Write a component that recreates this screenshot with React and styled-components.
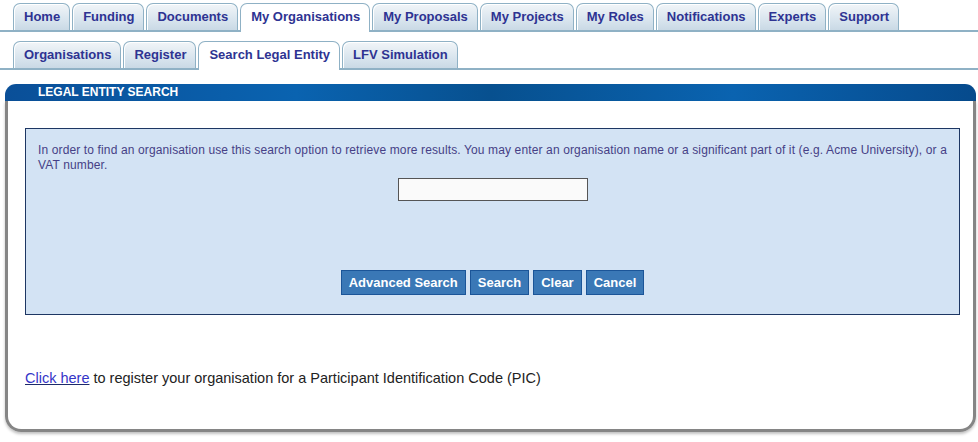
import React from "react";
import styled, { createGlobalStyle } from "styled-components";

const Global = createGlobalStyle`
  body {
    margin: 0;
    background: #fff;
    font-family: "Liberation Sans", Arial, sans-serif;
  }
`;

const Page = styled.div`
  width: 978px;
  height: 442px;
  overflow: hidden;
`;

const TabBar = styled.div`
  display: flex;
  gap: 2px;
  padding: ${(p) => p.$top}px 0 0 13px;
  border-bottom: 2px solid #8fb1c5;
  height: ${(p) => p.$height}px;
  box-sizing: content-box;
`;

const Tab = styled.div`
  box-sizing: border-box;
  padding: 0 9px ${(p) => (p.$active ? "4px" : "2px")} 10px;
  display: flex;
  align-items: center;
  font-size: 13px;
  font-weight: bold;
  color: #2e3392;
  border: 1px solid #8fb1c5;
  border-bottom: none;
  border-radius: 7px 7px 0 0;
  background: ${(p) =>
    p.$active ? "#fff" : "linear-gradient(#f1f5f8, #d5e2ec 70%, #c9d9e5)"};
  margin-bottom: ${(p) => (p.$active ? "-2px" : "0")};
  height: ${(p) => (p.$active ? "calc(100% + 2px)" : "100%")};
  box-shadow: ${(p) => (p.$active ? "none" : "inset 1px 1px 0 #fff")};
`;

const Panel = styled.div`
  margin: 14px 2px 0 5px;
`;

const PanelHeader = styled.div`
  height: 17px;
  border-radius: 11px 11px 0 0;
  background: linear-gradient(90deg, #0a4f98 0%, #0a63b0 30%, #07508f 50%, #0a63b0 75%, #064a8c 100%);
  color: #fff;
  font-size: 12px;
  font-weight: bold;
  line-height: 17px;
  padding-left: 33px;
`;

const PanelBody = styled.div`
  border: 3px solid #858585;
  border-top: none;
  border-radius: 0 0 16px 16px;
  height: 331px;
  box-sizing: border-box;
  padding: 27px 13px 0 17px;
  box-shadow: 0 2px 3px rgba(0, 0, 0, 0.25);
`;

const SearchBox = styled.div`
  height: 187px;
  box-sizing: border-box;
  background: #d3e3f4;
  border: 1px solid #1d3663;
  padding: 14px 12px 0 12px;
  display: flex;
  flex-direction: column;
  align-items: center;
`;

const Info = styled.p`
  margin: 0;
  align-self: stretch;
  font-size: 12px;
  letter-spacing: 0.13px;
  line-height: 15px;
  color: #463f86;
`;

const SearchInput = styled.input`
  margin-top: 5px;
  width: 190px;
  height: 23px;
  box-sizing: border-box;
  border: 1px solid #555;
  background: #fafafa;
`;

const Buttons = styled.div`
  display: flex;
  gap: 4px;
  margin-top: 69px;
`;

const Button = styled.button`
  height: 25px;
  padding: 0 7px;
  background: #3a78b6;
  border: 1px solid #1b5598;
  color: #fff;
  font-family: "Liberation Sans", Arial, sans-serif;
  font-size: 13px;
  font-weight: bold;
  cursor: pointer;
`;

const Note = styled.p`
  margin: 55px 0 0 0;
  font-size: 14.5px;
  color: #222;
  a {
    color: #3535c8;
    text-decoration: underline;
    text-decoration-color: #1d2a6a;
  }
`;

const mainTabs = [
  "Home",
  "Funding",
  "Documents",
  "My Organisations",
  "My Proposals",
  "My Projects",
  "My Roles",
  "Notifications",
  "Experts",
  "Support",
];

const subTabs = ["Organisations", "Register", "Search Legal Entity", "LFV Simulation"];

export default function App() {
  return (
    <Page>
      <Global />
      <TabBar $top={3} $height={27}>
        {mainTabs.map((t) => (
          <Tab key={t} $active={t === "My Organisations"}>
            {t}
          </Tab>
        ))}
      </TabBar>
      <TabBar $top={9} $height={27}>
        {subTabs.map((t) => (
          <Tab key={t} $active={t === "Search Legal Entity"}>
            {t}
          </Tab>
        ))}
      </TabBar>
      <Panel>
        <PanelHeader>LEGAL ENTITY SEARCH</PanelHeader>
        <PanelBody>
          <SearchBox>
            <Info>
              In order to find an organisation use this search option to retrieve more results. You may
              enter an organisation name or a significant part of it (e.g. Acme University), or a VAT
              number.
            </Info>
            <SearchInput type="text" />
            <Buttons>
              <Button>Advanced Search</Button>
              <Button>Search</Button>
              <Button>Clear</Button>
              <Button>Cancel</Button>
            </Buttons>
          </SearchBox>
          <Note>
            <a href="#">Click here</a> to register your organisation for a Participant Identification
            Code (PIC)
          </Note>
        </PanelBody>
      </Panel>
    </Page>
  );
}
